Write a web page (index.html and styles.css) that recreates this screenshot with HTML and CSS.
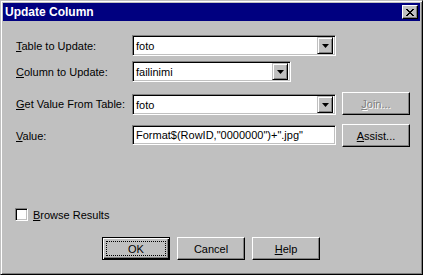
FILE: index.html
```html
<!DOCTYPE html>
<html lang="en">
<head>
    <meta charset="UTF-8">
    <meta name="viewport" content="width=device-width, initial-scale=1.0">
    <title>Update Column</title>
    <link rel="stylesheet" href="styles.css">
</head>
<body>
    <div class="window">
        <div class="titlebar">
            <span class="title">Update Column</span>
            <span class="close-btn">
                <svg width="8" height="7" viewBox="0 0 8 7" shape-rendering="crispEdges">
                    <path d="M0 0h2v1H0z M6 0h2v1H6z M1 1h2v1H1z M5 1h2v1H5z M2 2h4v1H2z M3 3h2v1H3z M2 4h4v1H2z M1 5h2v1H1z M5 5h2v1H5z M0 6h2v1H0z M6 6h2v1H6z" fill="#000"/>
                </svg>
            </span>
        </div>

        <div class="dialog-body">
            <div class="row row-table">
                <label class="lbl"><u>T</u>able to Update:</label>
                <div class="combo combo-wide">
                    <span class="field-text">foto</span>
                    <span class="drop-btn"><svg width="7" height="4" viewBox="0 0 7 4"><polygon points="0,0 7,0 3.5,4" fill="#000"/></svg></span>
                </div>
            </div>

            <div class="row row-column">
                <label class="lbl"><u>C</u>olumn to Update:</label>
                <div class="combo combo-narrow">
                    <span class="field-text">failinimi</span>
                    <span class="drop-btn"><svg width="7" height="4" viewBox="0 0 7 4"><polygon points="0,0 7,0 3.5,4" fill="#000"/></svg></span>
                </div>
            </div>

            <div class="row row-from">
                <label class="lbl"><u>G</u>et Value From Table:</label>
                <div class="combo combo-wide combo-low">
                    <span class="field-text">foto</span>
                    <span class="drop-btn"><svg width="7" height="4" viewBox="0 0 7 4"><polygon points="0,0 7,0 3.5,4" fill="#000"/></svg></span>
                </div>
                <button class="btn side-btn" disabled><u>J</u>oin...</button>
            </div>

            <div class="row row-value">
                <label class="lbl"><u>V</u>alue:</label>
                <div class="edit">
                    <span class="field-text">Format$(RowID,"0000000")+".jpg"</span>
                </div>
                <button class="btn side-btn"><u>A</u>ssist...</button>
            </div>

            <div class="row row-check">
                <span class="checkbox"></span>
                <span class="check-label"><u>B</u>rowse Results</span>
            </div>

            <div class="row row-buttons">
                <button class="btn btn-default">OK</button>
                <button class="btn">Cancel</button>
                <button class="btn"><u>H</u>elp</button>
            </div>
        </div>
    </div>
</body>
</html>
```

FILE: styles.css
```css
html, body {
    margin: 0;
    padding: 0;
    background-color: #c0c0c0;
}
body {
    font-family: "Liberation Sans", Arial, sans-serif;
    font-size: 11px;
    color: #000;
}
.window {
    width: 423px;
    height: 275px;
    box-sizing: border-box;
    padding: 2px;
    background-color: #c0c0c0;
    border: 1px solid;
    border-color: #c0c0c0 #000 #000 #c0c0c0;
    box-shadow: inset 1px 1px #fff, inset -1px -1px #808080;
}
.titlebar {
    height: 18px;
    display: flex;
    align-items: center;
    justify-content: space-between;
    padding: 0 2px 0 2px;
    background-color: #000080;
}
.title {
    color: #fff;
    font-weight: bold;
    font-size: 12px;
}
.close-btn {
    width: 16px;
    height: 14px;
    box-sizing: border-box;
    display: flex;
    align-items: center;
    justify-content: center;
    padding-top: 1px;
    background-color: #c0c0c0;
    border: 1px solid;
    border-color: #fff #000 #000 #fff;
    box-shadow: inset -1px -1px #808080;
}
.dialog-body {
    padding: 0 0 0 13px;
}
.row {
    display: flex;
    align-items: center;
}
.lbl {
    width: 116px;
    flex-shrink: 0;
}
.row-table {
    margin-top: 14px;
    height: 21px;
}
.row-column {
    margin-top: 5px;
    height: 21px;
}
.row-from {
    margin-top: 10px;
    height: 23px;
}
.row-value {
    margin-top: 9px;
    height: 23px;
}
.row-check {
    margin-top: 60px;
    height: 15px;
}
.row-buttons {
    margin-top: 15px;
    height: 23px;
    padding-left: 86px;
    gap: 7px;
}

/* sunken fields */
.combo,
.edit {
    height: 21px;
    box-sizing: border-box;
    display: flex;
    align-items: center;
    background-color: #fff;
    border: 1px solid;
    border-color: #808080 #fff #fff #808080;
    box-shadow: inset 1px 1px #000, inset -1px -1px #c0c0c0;
    padding: 2px;
}
.combo-wide {
    width: 204px;
}
.combo-narrow {
    width: 159px;
}
.combo-low {
    align-self: flex-end;
}
.edit {
    width: 204px;
    height: 20px;
    align-self: flex-start;
    margin-top: 1px;
}
.field-text {
    flex: 1;
    padding-left: 1px;
    white-space: nowrap;
    overflow: hidden;
}
.drop-btn {
    width: 16px;
    height: 17px;
    box-sizing: border-box;
    display: flex;
    align-items: center;
    justify-content: center;
    background-color: #c0c0c0;
    border: 1px solid;
    border-color: #c0c0c0 #000 #000 #c0c0c0;
    box-shadow: inset 1px 1px #fff, inset -1px -1px #808080;
}

/* push buttons */
.btn {
    width: 68px;
    height: 23px;
    box-sizing: border-box;
    padding: 0;
    font-family: inherit;
    font-size: 11px;
    color: #000;
    background-color: #c0c0c0;
    border: 1px solid;
    border-color: #fff #000 #000 #fff;
    box-shadow: inset -1px -1px #808080;
    position: relative;
}
.side-btn {
    margin-left: 6px;
}
.row-from .side-btn {
    align-self: flex-start;
}
.btn:disabled {
    color: #808080;
    text-shadow: 1px 1px #fff;
}
.btn-default {
    border: 1px solid #000;
    box-shadow: inset 1px 1px #fff, inset -1px -1px #000, inset -2px -2px #808080;
}
.btn-default::after {
    content: "";
    position: absolute;
    top: 3px;
    left: 3px;
    right: 3px;
    bottom: 3px;
    border: 1px dotted #000;
}

/* checkbox */
.checkbox {
    width: 13px;
    height: 13px;
    box-sizing: border-box;
    margin-left: -1px;
    background-color: #fff;
    border: 1px solid;
    border-color: #808080 #fff #fff #808080;
    box-shadow: inset 1px 1px #000, inset -1px -1px #c0c0c0;
}
.check-label {
    margin-left: 5px;
}
```
